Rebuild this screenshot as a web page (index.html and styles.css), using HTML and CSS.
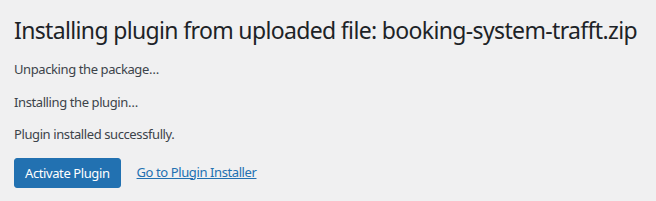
FILE: index.html
```html
<!DOCTYPE html>
<html>
<head>
<meta charset="utf-8">
<link rel="stylesheet" href="styles.css">
</head>
<body>
<div class="wrap">
  <h1 class="title">Installing plugin from uploaded file: booking-system-trafft.zip</h1>
  <p class="msg">Unpacking the package&hellip;</p>
  <p class="msg">Installing the plugin&hellip;</p>
  <p class="msg">Plugin installed successfully.</p>
  <p class="actions">
    <a class="button" href="#">Activate Plugin</a>
    <a class="link" href="#">Go to Plugin Installer</a>
  </p>
</div>
</body>
</html>
```
FILE: styles.css
```css
html, body {
  margin: 0;
  padding: 0;
  background: #f0f0f1;
}
body {
  font-family: "Noto Sans", "Open Sans", sans-serif;
  color: #3c434a;
  font-size: 13px;
  line-height: 19.5px;
  letter-spacing: -0.4px;
}
.wrap {
  padding: 0 14px;
}
.title {
  margin: 0;
  padding: 15px 0 2px;
  font-size: 23px;
  font-weight: 400;
  line-height: 30px;
  letter-spacing: -0.65px;
  color: #1d2327;
  white-space: nowrap;
}
.msg {
  margin: 13px 0;
}
.actions {
  margin: 8px 0;
  display: flex;
  align-items: center;
  gap: 16px;
}
.button {
  display: inline-block;
  background: #2271b1;
  color: #fff;
  border: 1px solid #2271b1;
  border-radius: 3px;
  padding: 0 10px;
  line-height: 28px;
  text-decoration: none;
}
.link {
  color: #2271b1;
  text-decoration: underline;
}
```
